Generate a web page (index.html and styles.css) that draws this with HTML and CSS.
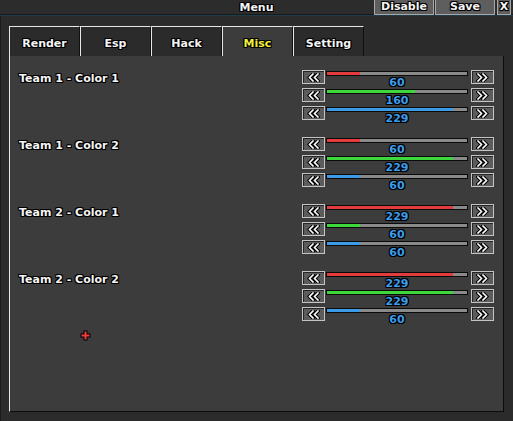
FILE: index.html
```html
<!DOCTYPE html>
<html>
<head>
<meta charset="utf-8">
<link rel="stylesheet" href="styles.css">
</head>
<body>
<div class="titlebar">
  <div></div>
  <div class="title">Menu</div>
  <div class="title-btns">
    <div class="tbtn disable">Disable</div>
    <div class="tbtn save">Save</div>
    <div class="tbtn close">X</div>
  </div>
</div>
<div class="strip"></div>
<div class="window">
  <div class="tabs">
    <div class="tab">Render</div>
    <div class="tab">Esp</div>
    <div class="tab">Hack</div>
    <div class="tab active">Misc</div>
    <div class="tab">Setting</div>
  </div>
  <div class="panel">
    <div class="group">
      <div class="label">Team 1 - Color 1</div>
      <div class="sliders">
        <div class="srow"><div class="sbtn"><svg width="13" height="9" viewBox="0 0 13 9"><polyline points="6,1 2.5,4.5 6,8" class="o"/><polyline points="11,1 7.5,4.5 11,8" class="o"/><polyline points="6,1 2.5,4.5 6,8" class="i"/><polyline points="11,1 7.5,4.5 11,8" class="i"/></svg></div><div class="track"><div class="bar"><div class="fill red" style="width:23.5%"></div></div><div class="val">60</div></div><div class="sbtn"><svg width="13" height="9" viewBox="0 0 13 9"><polyline points="2,1 5.5,4.5 2,8" class="o"/><polyline points="7,1 10.5,4.5 7,8" class="o"/><polyline points="2,1 5.5,4.5 2,8" class="i"/><polyline points="7,1 10.5,4.5 7,8" class="i"/></svg></div></div>
        <div class="srow"><div class="sbtn"><svg width="13" height="9" viewBox="0 0 13 9"><polyline points="6,1 2.5,4.5 6,8" class="o"/><polyline points="11,1 7.5,4.5 11,8" class="o"/><polyline points="6,1 2.5,4.5 6,8" class="i"/><polyline points="11,1 7.5,4.5 11,8" class="i"/></svg></div><div class="track"><div class="bar"><div class="fill green" style="width:62.7%"></div></div><div class="val">160</div></div><div class="sbtn"><svg width="13" height="9" viewBox="0 0 13 9"><polyline points="2,1 5.5,4.5 2,8" class="o"/><polyline points="7,1 10.5,4.5 7,8" class="o"/><polyline points="2,1 5.5,4.5 2,8" class="i"/><polyline points="7,1 10.5,4.5 7,8" class="i"/></svg></div></div>
        <div class="srow"><div class="sbtn"><svg width="13" height="9" viewBox="0 0 13 9"><polyline points="6,1 2.5,4.5 6,8" class="o"/><polyline points="11,1 7.5,4.5 11,8" class="o"/><polyline points="6,1 2.5,4.5 6,8" class="i"/><polyline points="11,1 7.5,4.5 11,8" class="i"/></svg></div><div class="track"><div class="bar"><div class="fill blue" style="width:89.8%"></div></div><div class="val">229</div></div><div class="sbtn"><svg width="13" height="9" viewBox="0 0 13 9"><polyline points="2,1 5.5,4.5 2,8" class="o"/><polyline points="7,1 10.5,4.5 7,8" class="o"/><polyline points="2,1 5.5,4.5 2,8" class="i"/><polyline points="7,1 10.5,4.5 7,8" class="i"/></svg></div></div>
      </div>
    </div>
    <div class="group">
      <div class="label">Team 1 - Color 2</div>
      <div class="sliders">
        <div class="srow"><div class="sbtn"><svg width="13" height="9" viewBox="0 0 13 9"><polyline points="6,1 2.5,4.5 6,8" class="o"/><polyline points="11,1 7.5,4.5 11,8" class="o"/><polyline points="6,1 2.5,4.5 6,8" class="i"/><polyline points="11,1 7.5,4.5 11,8" class="i"/></svg></div><div class="track"><div class="bar"><div class="fill red" style="width:23.5%"></div></div><div class="val">60</div></div><div class="sbtn"><svg width="13" height="9" viewBox="0 0 13 9"><polyline points="2,1 5.5,4.5 2,8" class="o"/><polyline points="7,1 10.5,4.5 7,8" class="o"/><polyline points="2,1 5.5,4.5 2,8" class="i"/><polyline points="7,1 10.5,4.5 7,8" class="i"/></svg></div></div>
        <div class="srow"><div class="sbtn"><svg width="13" height="9" viewBox="0 0 13 9"><polyline points="6,1 2.5,4.5 6,8" class="o"/><polyline points="11,1 7.5,4.5 11,8" class="o"/><polyline points="6,1 2.5,4.5 6,8" class="i"/><polyline points="11,1 7.5,4.5 11,8" class="i"/></svg></div><div class="track"><div class="bar"><div class="fill green" style="width:89.8%"></div></div><div class="val">229</div></div><div class="sbtn"><svg width="13" height="9" viewBox="0 0 13 9"><polyline points="2,1 5.5,4.5 2,8" class="o"/><polyline points="7,1 10.5,4.5 7,8" class="o"/><polyline points="2,1 5.5,4.5 2,8" class="i"/><polyline points="7,1 10.5,4.5 7,8" class="i"/></svg></div></div>
        <div class="srow"><div class="sbtn"><svg width="13" height="9" viewBox="0 0 13 9"><polyline points="6,1 2.5,4.5 6,8" class="o"/><polyline points="11,1 7.5,4.5 11,8" class="o"/><polyline points="6,1 2.5,4.5 6,8" class="i"/><polyline points="11,1 7.5,4.5 11,8" class="i"/></svg></div><div class="track"><div class="bar"><div class="fill blue" style="width:23.5%"></div></div><div class="val">60</div></div><div class="sbtn"><svg width="13" height="9" viewBox="0 0 13 9"><polyline points="2,1 5.5,4.5 2,8" class="o"/><polyline points="7,1 10.5,4.5 7,8" class="o"/><polyline points="2,1 5.5,4.5 2,8" class="i"/><polyline points="7,1 10.5,4.5 7,8" class="i"/></svg></div></div>
      </div>
    </div>
    <div class="group">
      <div class="label">Team 2 - Color 1</div>
      <div class="sliders">
        <div class="srow"><div class="sbtn"><svg width="13" height="9" viewBox="0 0 13 9"><polyline points="6,1 2.5,4.5 6,8" class="o"/><polyline points="11,1 7.5,4.5 11,8" class="o"/><polyline points="6,1 2.5,4.5 6,8" class="i"/><polyline points="11,1 7.5,4.5 11,8" class="i"/></svg></div><div class="track"><div class="bar"><div class="fill red" style="width:89.8%"></div></div><div class="val">229</div></div><div class="sbtn"><svg width="13" height="9" viewBox="0 0 13 9"><polyline points="2,1 5.5,4.5 2,8" class="o"/><polyline points="7,1 10.5,4.5 7,8" class="o"/><polyline points="2,1 5.5,4.5 2,8" class="i"/><polyline points="7,1 10.5,4.5 7,8" class="i"/></svg></div></div>
        <div class="srow"><div class="sbtn"><svg width="13" height="9" viewBox="0 0 13 9"><polyline points="6,1 2.5,4.5 6,8" class="o"/><polyline points="11,1 7.5,4.5 11,8" class="o"/><polyline points="6,1 2.5,4.5 6,8" class="i"/><polyline points="11,1 7.5,4.5 11,8" class="i"/></svg></div><div class="track"><div class="bar"><div class="fill green" style="width:23.5%"></div></div><div class="val">60</div></div><div class="sbtn"><svg width="13" height="9" viewBox="0 0 13 9"><polyline points="2,1 5.5,4.5 2,8" class="o"/><polyline points="7,1 10.5,4.5 7,8" class="o"/><polyline points="2,1 5.5,4.5 2,8" class="i"/><polyline points="7,1 10.5,4.5 7,8" class="i"/></svg></div></div>
        <div class="srow"><div class="sbtn"><svg width="13" height="9" viewBox="0 0 13 9"><polyline points="6,1 2.5,4.5 6,8" class="o"/><polyline points="11,1 7.5,4.5 11,8" class="o"/><polyline points="6,1 2.5,4.5 6,8" class="i"/><polyline points="11,1 7.5,4.5 11,8" class="i"/></svg></div><div class="track"><div class="bar"><div class="fill blue" style="width:23.5%"></div></div><div class="val">60</div></div><div class="sbtn"><svg width="13" height="9" viewBox="0 0 13 9"><polyline points="2,1 5.5,4.5 2,8" class="o"/><polyline points="7,1 10.5,4.5 7,8" class="o"/><polyline points="2,1 5.5,4.5 2,8" class="i"/><polyline points="7,1 10.5,4.5 7,8" class="i"/></svg></div></div>
      </div>
    </div>
    <div class="group">
      <div class="label">Team 2 - Color 2</div>
      <div class="sliders">
        <div class="srow"><div class="sbtn"><svg width="13" height="9" viewBox="0 0 13 9"><polyline points="6,1 2.5,4.5 6,8" class="o"/><polyline points="11,1 7.5,4.5 11,8" class="o"/><polyline points="6,1 2.5,4.5 6,8" class="i"/><polyline points="11,1 7.5,4.5 11,8" class="i"/></svg></div><div class="track"><div class="bar"><div class="fill red" style="width:89.8%"></div></div><div class="val">229</div></div><div class="sbtn"><svg width="13" height="9" viewBox="0 0 13 9"><polyline points="2,1 5.5,4.5 2,8" class="o"/><polyline points="7,1 10.5,4.5 7,8" class="o"/><polyline points="2,1 5.5,4.5 2,8" class="i"/><polyline points="7,1 10.5,4.5 7,8" class="i"/></svg></div></div>
        <div class="srow"><div class="sbtn"><svg width="13" height="9" viewBox="0 0 13 9"><polyline points="6,1 2.5,4.5 6,8" class="o"/><polyline points="11,1 7.5,4.5 11,8" class="o"/><polyline points="6,1 2.5,4.5 6,8" class="i"/><polyline points="11,1 7.5,4.5 11,8" class="i"/></svg></div><div class="track"><div class="bar"><div class="fill green" style="width:89.8%"></div></div><div class="val">229</div></div><div class="sbtn"><svg width="13" height="9" viewBox="0 0 13 9"><polyline points="2,1 5.5,4.5 2,8" class="o"/><polyline points="7,1 10.5,4.5 7,8" class="o"/><polyline points="2,1 5.5,4.5 2,8" class="i"/><polyline points="7,1 10.5,4.5 7,8" class="i"/></svg></div></div>
        <div class="srow"><div class="sbtn"><svg width="13" height="9" viewBox="0 0 13 9"><polyline points="6,1 2.5,4.5 6,8" class="o"/><polyline points="11,1 7.5,4.5 11,8" class="o"/><polyline points="6,1 2.5,4.5 6,8" class="i"/><polyline points="11,1 7.5,4.5 11,8" class="i"/></svg></div><div class="track"><div class="bar"><div class="fill blue" style="width:23.5%"></div></div><div class="val">60</div></div><div class="sbtn"><svg width="13" height="9" viewBox="0 0 13 9"><polyline points="2,1 5.5,4.5 2,8" class="o"/><polyline points="7,1 10.5,4.5 7,8" class="o"/><polyline points="2,1 5.5,4.5 2,8" class="i"/><polyline points="7,1 10.5,4.5 7,8" class="i"/></svg></div></div>
      </div>
    </div>
    <svg class="cross" width="13" height="13" viewBox="0 0 13 13">
      <path d="M6.5 1.5 V11.5 M1.5 6.5 H11.5" stroke="#000" stroke-width="4" fill="none"/>
      <path d="M6.5 2.5 V10.5 M2.5 6.5 H10.5" stroke="#f03c3c" stroke-width="2" fill="none"/>
    </svg>
  </div>
</div>
</body>
</html>
```

FILE: styles.css
```css
* { box-sizing: border-box; }
html, body { margin: 0; padding: 0; }
body {
  width: 513px;
  height: 421px;
  overflow: hidden;
  background: #2b2b2b;
  font-family: "DejaVu Sans", "Liberation Sans", sans-serif;
  font-weight: bold;
  font-size: 11px;
  color: #f4f4f4;
}
.titlebar {
  height: 15px;
  display: grid;
  grid-template-columns: 1fr auto 1fr;
  background: #2c2c2c;
  border-bottom: 1px solid #1a1a1a;
}
.title, .tab, .label, .tbtn {
  text-shadow: 1px 0 0 #000, -1px 0 0 #000, 0 1px 0 #000, 0 -1px 0 #000, 1px 1px 0 #000, -1px -1px 0 #000, 1px -1px 0 #000, -1px 1px 0 #000;
}
.title {
  line-height: 15px;
  text-align: center;
}
.title-btns {
  display: flex;
  justify-content: flex-end;
  padding-right: 2px;
  gap: 1px;
}
.tbtn {
  height: 15px;
  line-height: 13px;
  background: #5e5e5e;
  border: 1px solid #a8a8a8;
  border-top: none;
  text-align: center;
}
.disable { width: 60px; }
.save { width: 60px; }
.close { width: 14px; margin-left: 1px; }
.strip {
  height: 1px;
  background: #1f3a48;
}
.window {
  height: 405px;
  padding: 10px 9px 9px 8px;
  background: #2b2b2b;
  border-left: 1px solid #1a1a1a;
  display: flex;
  flex-direction: column;
}
.tabs {
  display: flex;
  height: 30px;
}
.tab {
  width: 71px;
  height: 30px;
  line-height: 29px;
  padding-top: 2px;
  text-align: center;
  background: #2b2b2b;
  border-left: 1px solid #e6e6e6;
  border-top: 1px solid #e6e6e6;
  border-right: 1px solid #101010;
}
.tab.active {
  background: #3c3c3c;
  color: #f0f03c;
}
.panel {
  position: relative;
  flex: 1;
  background: #3c3c3c;
  border-left: 1px solid #e6e6e6;
  border-right: 1px solid #0c0c0c;
  border-bottom: 1px solid #0c0c0c;
  padding: 14px 9px 0 9px;
  display: flex;
  flex-direction: column;
  gap: 13px;
}
.group {
  display: flex;
  justify-content: space-between;
}
.label {
  line-height: 13px;
  padding-top: 2px;
}
.sliders {
  width: 192px;
  display: flex;
  flex-direction: column;
}
.srow {
  height: 18px;
  display: flex;
}
.sbtn {
  width: 23px;
  height: 14px;
  background: #5c5c5c;
  border: 1px solid #c4c4c4;
  box-shadow: inset 1px 1px 0 #262626;
  display: flex;
  align-items: center;
  justify-content: center;
}
.sbtn svg { display: block; }
.sbtn .o { fill: none; stroke: #000; stroke-width: 3.6; stroke-linecap: square; }
.sbtn .i { fill: none; stroke: #fff; stroke-width: 1.6; stroke-linecap: square; }
.track {
  width: 142px;
  margin: 0 3px 0 1px;
  padding-top: 1px;
  display: flex;
  flex-direction: column;
  align-items: stretch;
}
.bar {
  height: 5px;
  background: #8a8a8a;
  border: 1px solid #0a0a0a;
  display: flex;
}
.fill { height: 100%; }
.red { background: #e23c3c; }
.green { background: #3cd83c; }
.blue { background: #3c9ae6; }
.val {
  text-align: center;
  line-height: 11px;
  padding-top: 1px;
  color: #3c9ceb;
  text-shadow: 1px 0 0 #000, -1px 0 0 #000, 0 1px 0 #000, 0 -1px 0 #000, 1px 1px 0 #000, -1px -1px 0 #000, 1px -1px 0 #000, -1px 1px 0 #000;
}
.cross {
  position: absolute;
  left: 69px;
  top: 273px;
}
```
